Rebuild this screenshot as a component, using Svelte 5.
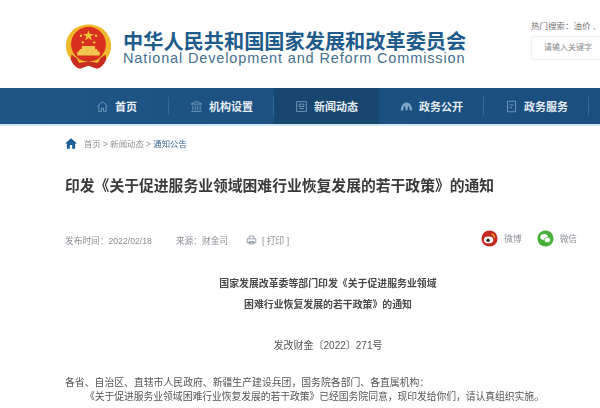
<script>
  const nav = [
    { label: '首页', icon: 'home' },
    { label: '机构设置', icon: 'bank' },
    { label: '新闻动态', icon: 'news', active: true },
    { label: '政务公开', icon: 'fan' },
    { label: '政务服务', icon: 'doc' },
  ]
</script>

<div class="page">
  <header class="top">
    <div class="brand">
      <svg class="emblem" viewBox="0 0 50 52" width="47" height="50" aria-hidden="true">
        <path d="M25 1C11 1 1 11 1 24c0 7 3 12 7 16h34c4-4 7-9 7-16C49 11 39 1 25 1z" fill="#f0b92c" />
        <circle cx="25" cy="22" r="18.5" fill="#d9301f" />
        <path d="M25 7l1.4 4.2h4.4l-3.6 2.6 1.4 4.2-3.6-2.6-3.6 2.6 1.4-4.2-3.6-2.6h4.4z" fill="#f5c53a" />
        <circle cx="17" cy="13" r="1.3" fill="#f5c53a" />
        <circle cx="33" cy="13" r="1.3" fill="#f5c53a" />
        <circle cx="19" cy="20" r="1.3" fill="#f5c53a" />
        <circle cx="31" cy="20" r="1.3" fill="#f5c53a" />
        <path d="M16 27h18l1.5 3h-21zM18 24h14v3H18zM13 30h24v4H13z" fill="#f3c650" />
        <path d="M7 33c5 5 11 6 18 6s13-1 18-6l1 5c-2 5-5 9-10 10l-9-3-9 3c-5-1-8-5-10-10z" fill="#c92c22" />
        <path d="M12 36c4 3 8 4 13 4s9-1 13-4l-3 6-10-2-10 2z" fill="#f0b92c" />
      </svg>
      <div class="names">
        <div class="cn">中华人民共和国国家发展和改革委员会</div>
        <div class="en">National Development and Reform Commission</div>
      </div>
    </div>
    <div class="search">
      <div class="hot">热门搜索：油价 、</div>
      <div class="box">请输入关键字</div>
    </div>
  </header>

  <nav class="nav">
    {#each nav as item}
      <div class="nav-item" class:active={item.active}>
        <svg viewBox="0 0 16 16" width="13" height="13" aria-hidden="true" class="nav-icon">
          {#if item.icon === 'home'}
            <path d="M1.5 8L8 2l6.5 6M3.5 7v7h3.2v-4h2.6v4h3.2V7" />
          {:else if item.icon === 'bank'}
            <path d="M1.5 5L8 1.5 14.5 5zM3.500 6.500v6M6.500 6.500v6M9.500 6.500v6M12.500 6.500v6M1.500 14h13" />
          {:else if item.icon === 'news'}
            <path d="M2 2h12v12H2zM5 5h6v3H5zM5 10.500h6" />
          {:else if item.icon === 'fan'}
            <path class="solid" d="M1 13C1 7 4 3 8 3s7 4 7 10h-3c0-3-1-5-2-6l-1 6H7L6 7c-1 1-2 3-2 6z" />
          {:else}
            <path d="M3 1.500h10v13H3zM5.500 6h5M5.500 9h3" />
          {/if}
        </svg>
        <span>{item.label}</span>
      </div>
    {/each}
  </nav>

  <main class="main">
    <div class="crumbs">
      <svg viewBox="0 0 16 14" width="12" height="11" aria-hidden="true">
        <path d="M8 0L0 7h2.500v7h4V9h3v5h4V7H16z" fill="#1d5f98" />
      </svg>
      <span>首页 &gt; 新闻动态 &gt; <b>通知公告</b></span>
    </div>

    <h1>印发《关于促进服务业领域困难行业恢复发展的若干政策》的通知</h1>

    <div class="meta">
      <div class="info">
        <span>发布时间：2022/02/18</span>
        <span>来源：财金司</span>
        <span class="print">
          <svg viewBox="0 0 14 12" width="11" height="10" aria-hidden="true">
            <path d="M4 4V1h6v3M1.500 4.500h11v5h-11zM4 8h6v3H4z" fill="none" stroke="#7d8894" stroke-width="1" />
          </svg>
          [ 打印 ]
        </span>
      </div>
      <div class="share">
        <span class="chip">
          <svg viewBox="0 0 18 18" width="17" height="17" aria-hidden="true">
            <circle cx="9" cy="9" r="8.500" fill="#c5281f" />
            <ellipse cx="8" cy="10.500" rx="5" ry="3.600" fill="#fff" />
            <circle cx="7.500" cy="10.800" r="1.800" fill="#3a2a20" />
            <path d="M11 4.500c2.500 0 3.500 2 3 4" fill="none" stroke="#f3b63a" stroke-width="1.200" />
          </svg>
          微博
        </span>
        <span class="chip">
          <svg viewBox="0 0 18 18" width="17" height="17" aria-hidden="true">
            <circle cx="9" cy="9" r="8.500" fill="#45b035" />
            <ellipse cx="7.500" cy="7.500" rx="4" ry="3.200" fill="#fff" />
            <ellipse cx="11" cy="10.500" rx="3.400" ry="2.700" fill="#fff" stroke="#45b035" stroke-width="0.700" />
          </svg>
          微信
        </span>
      </div>
    </div>

    <section class="doc">
      <div class="doc-title">
        <p>国家发展改革委等部门印发《关于促进服务业领域</p>
        <p>困难行业恢复发展的若干政策》的通知</p>
      </div>
      <p class="doc-no">发改财金〔2022〕271号</p>
      <p class="body">各省、自治区、直辖市人民政府、新疆生产建设兵团，国务院各部门、各直属机构：</p>
      <p class="body indent">《关于促进服务业领域困难行业恢复发展的若干政策》已经国务院同意，现印发给你们，请认真组织实施。</p>
    </section>
  </main>
</div>

<style>
  :global(body) {
    margin: 0;
    background: #fff;
  }

  .page {
    width: 600px;
    height: 408px;
    overflow: hidden;
    font-family: "Liberation Sans", "Noto Sans CJK SC", sans-serif;
    color: #444;
    filter: blur(0.4px);
  }

  p {
    margin: 0;
  }

  .top {
    height: 88px;
    box-sizing: border-box;
    padding: 15px 0 0 65px;
    display: flex;
    justify-content: space-between;
    background: linear-gradient(#fff 85%, #fbfcfd);
  }

  .brand {
    display: flex;
    gap: 11px;
    align-items: flex-start;
    padding-top: 8px;
  }

  .cn {
    font-size: 20.2px;
    line-height: 20px;
    margin-top: 9px;
    font-weight: 700;
    color: #1f5c8c;
    white-space: nowrap;
  }

  .en {
    font-size: 14.5px;
    line-height: 13px;
    letter-spacing: 0.86px;
    color: #44708f;
    white-space: nowrap;
  }

  .search {
    width: 69px;
    font-size: 8.5px;
    color: #777;
    overflow: hidden;
    flex: none;
  }

  .hot {
    white-space: nowrap;
    margin-top: 5px;
    line-height: 12px;
  }

  .box {
    margin-top: 4px;
    height: 24px;
    width: 90px;
    box-sizing: border-box;
    padding-left: 12px;
    line-height: 22px;
    font-size: 8px;
    color: #888;
    border: 1px solid #eceef0;
    border-radius: 3px;
  }

  .nav {
    height: 36px;
    padding-left: 64px;
    display: flex;
    background: linear-gradient(90deg, #1f5688, #1b5080 50%, #1b4f80);
    border-bottom: 2px solid #cfe6f3;
  }

  .nav-item {
    width: 105px;
    flex: none;
    display: flex;
    align-items: center;
    justify-content: center;
    gap: 6px;
    color: #e4ecf3;
    font-size: 11px;
    font-weight: 700;
    position: relative;
  }

  .nav-item::after {
    content: '';
    position: absolute;
    right: 0;
    top: 9px;
    bottom: 9px;
    width: 1px;
    background: #356a98;
  }

  .nav-item.active {
    background: #17466f;
  }

  .nav-item.active::after {
    display: none;
  }

  .nav-icon path {
    fill: none;
    stroke: #7fa5c6;
    stroke-width: 1;
  }

  .nav-icon path.solid {
    fill: #7fa5c6;
    stroke: none;
  }

  .main {
    padding: 0 65px;
  }

  .crumbs {
    display: flex;
    align-items: center;
    gap: 7px;
    height: 14px;
    margin-top: 10px;
    font-size: 8.4px;
    color: #8a8f96;
  }

  .crumbs b {
    font-weight: 400;
    color: #36648c;
  }

  h1 {
    margin: 26px 0 0;
    font-size: 14.800px;
    line-height: 20px;
    font-weight: 700;
    color: #3a3a3a;
    white-space: nowrap;
  }

  .meta {
    display: flex;
    justify-content: space-between;
    align-items: center;
    margin-top: 34px;
    height: 20px;
    font-size: 8.7px;
    color: #8a8f96;
  }

  .info {
    display: flex;
    align-items: center;
    gap: 24px;
  }

  .print {
    display: flex;
    align-items: center;
    gap: 5px;
    margin-left: -6px;
  }

  .share {
    display: flex;
    gap: 15px;
    margin-right: -42px;
    margin-bottom: 4px;
  }

  .chip {
    display: flex;
    align-items: center;
    gap: 6px;
  }

  .doc {
    font-size: 9.85px;
    color: #555;
  }

  .doc-title {
    margin: 23px 0 0 56px;
    text-align: center;
    font-weight: 700;
    font-size: 9.9px;
    line-height: 21px;
    color: #4a4a4a;
  }

  .doc-no {
    margin: 23px 0 0 56px;
    text-align: center;
    font-size: 10px;
    line-height: 16px;
  }

  .body {
    line-height: 15px;
    white-space: nowrap;
  }

  .doc-no + .body {
    margin-top: 21px;
  }

  .indent {
    text-indent: 20px;
    letter-spacing: -0.08px;
    margin-top: -1px;
  }
</style>
